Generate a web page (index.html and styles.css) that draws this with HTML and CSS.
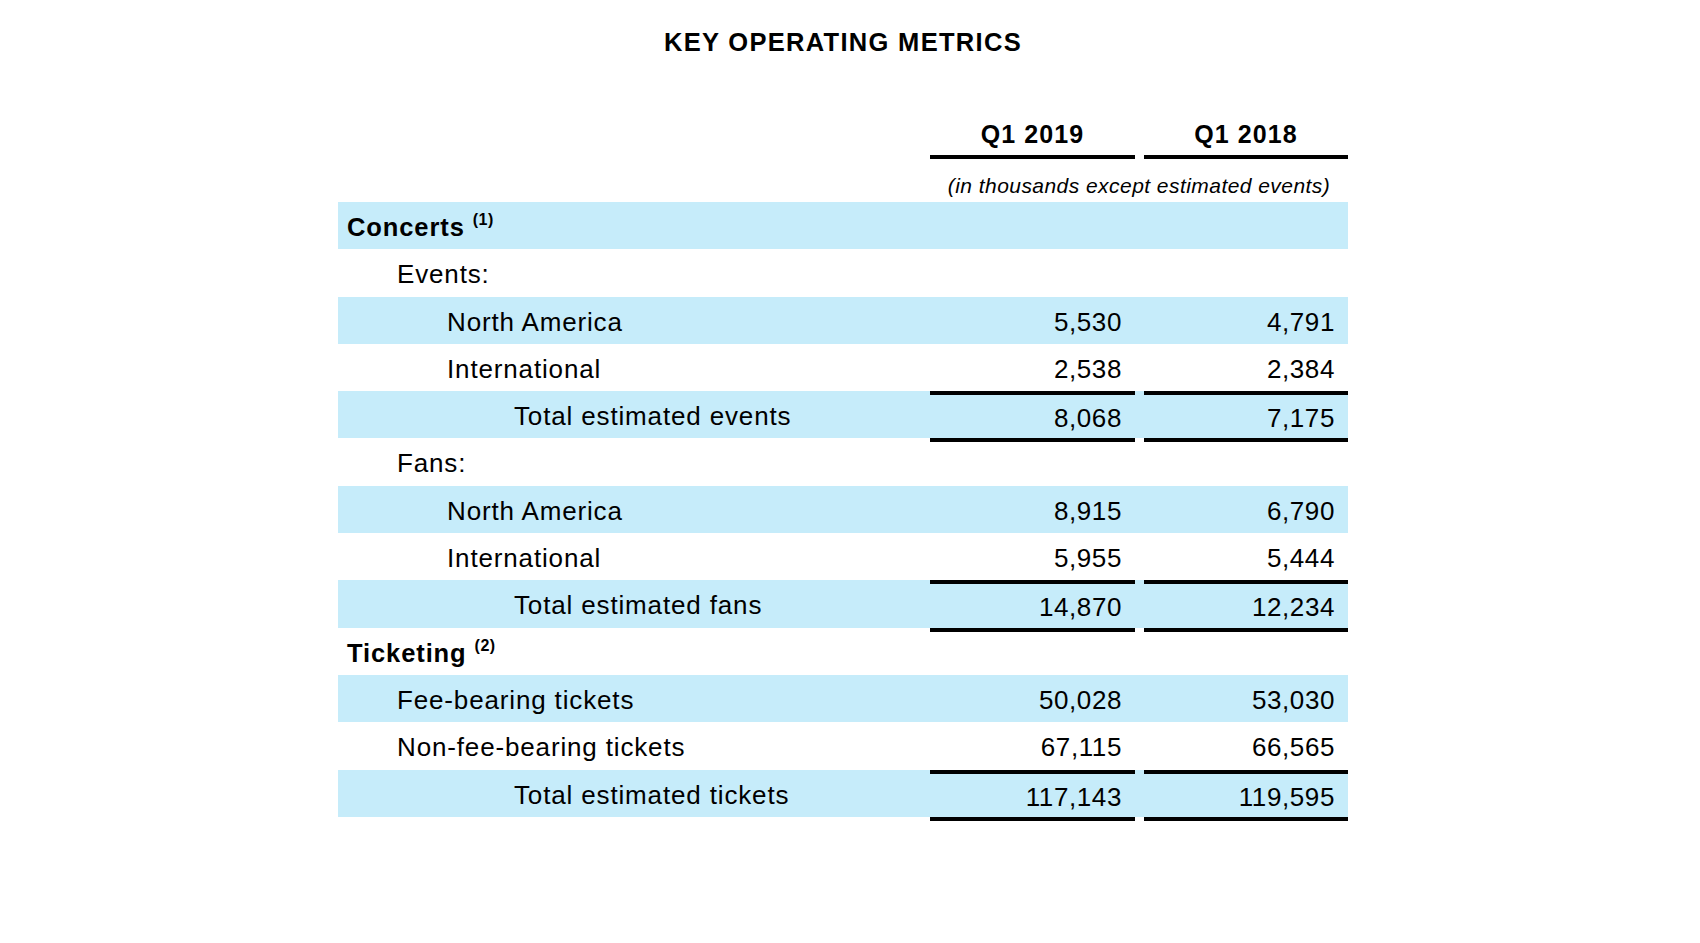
FILE: index.html
```html
<!DOCTYPE html>
<html lang="en">
<head>
<meta charset="utf-8">
<title>Key Operating Metrics</title>
<link rel="stylesheet" href="styles.css">
</head>
<body>
<div class="sheet">
  <h1 class="title">KEY OPERATING METRICS</h1>
  <div class="head">
    <div class="label"></div>
    <div class="col c1">Q1 2019</div>
    <div class="col c2">Q1 2018</div>
  </div>
  <div class="units">(in thousands except estimated events)</div>

  <div class="row blue"><div class="label l0 bold">Concerts <sup>(1)</sup></div><div class="num c1"></div><div class="num c2"></div></div>
  <div class="row"><div class="label l1">Events:</div><div class="num c1"></div><div class="num c2"></div></div>
  <div class="row blue"><div class="label l2">North America</div><div class="num c1">5,530</div><div class="num c2">4,791</div></div>
  <div class="row"><div class="label l2">International</div><div class="num c1">2,538</div><div class="num c2">2,384</div></div>
  <div class="row blue total"><div class="label l3">Total estimated events</div><div class="num c1">8,068</div><div class="num c2">7,175</div></div>
  <div class="row"><div class="label l1">Fans:</div><div class="num c1"></div><div class="num c2"></div></div>
  <div class="row blue"><div class="label l2">North America</div><div class="num c1">8,915</div><div class="num c2">6,790</div></div>
  <div class="row"><div class="label l2">International</div><div class="num c1">5,955</div><div class="num c2">5,444</div></div>
  <div class="row blue total"><div class="label l3">Total estimated fans</div><div class="num c1">14,870</div><div class="num c2">12,234</div></div>
  <div class="row"><div class="label l0 bold">Ticketing <sup>(2)</sup></div><div class="num c1"></div><div class="num c2"></div></div>
  <div class="row blue"><div class="label l1">Fee-bearing tickets</div><div class="num c1">50,028</div><div class="num c2">53,030</div></div>
  <div class="row"><div class="label l1">Non-fee-bearing tickets</div><div class="num c1">67,115</div><div class="num c2">66,565</div></div>
  <div class="row blue total"><div class="label l3">Total estimated tickets</div><div class="num c1">117,143</div><div class="num c2">119,595</div></div>
</div>
</body>
</html>
```
FILE: styles.css
```css
html, body {
  margin: 0;
  padding: 0;
  background: #ffffff;
}
body {
  font-family: "Liberation Sans", Arial, sans-serif;
  color: #000000;
}
.sheet {
  width: 1010px;
  margin-left: 338px;
  padding-bottom: 40px;
}
.title {
  margin: 0;
  padding-top: 28px;
  font-size: 25.5px;
  line-height: 28px;
  font-weight: 700;
  letter-spacing: 1.3px;
  text-align: center;
}
.head {
  display: flex;
  margin-top: 63px;
}
.label {
  width: 592px;
  flex: none;
  box-sizing: border-box;
  white-space: nowrap;
}
.c1 {
  width: 205px;
  flex: none;
  box-sizing: border-box;
}
.c2 {
  width: 204px;
  flex: none;
  margin-left: 9px;
  box-sizing: border-box;
}
.col {
  font-size: 25px;
  font-weight: 700;
  letter-spacing: 1.1px;
  line-height: 30px;
  text-align: center;
  padding-bottom: 6px;
  border-bottom: 4px solid #000;
}
.units {
  margin-left: 592px;
  width: 418px;
  text-align: center;
  font-style: italic;
  font-size: 21px;
  letter-spacing: 0.45px;
  line-height: 24px;
  padding: 15px 0 4px;
  white-space: nowrap;
}
.row {
  display: flex;
  height: 47.3px;
  font-size: 26px;
  letter-spacing: 0.85px;
  line-height: 47.3px;
}
.row > div {
  padding-top: 2px;
}
.row.blue {
  background: #c6ecfa;
}
.l0 { padding-left: 9px; }
.l1 { padding-left: 59px; }
.l2 { padding-left: 109px; }
.l3 { padding-left: 176px; }
.bold {
  font-size: 25.5px;
  font-weight: 700;
  letter-spacing: 0.9px;
}
.bold sup {
  font-size: 16px;
  line-height: 16px;
  letter-spacing: 0.5px;
  vertical-align: 11px;
}
.num {
  text-align: right;
  padding-right: 13px;
  letter-spacing: 0.6px;
}
.total .num {
  align-self: flex-start;
  height: 51.3px;
  border-top: 4px solid #000;
  border-bottom: 4px solid #000;
  line-height: 43.3px;
}
```
